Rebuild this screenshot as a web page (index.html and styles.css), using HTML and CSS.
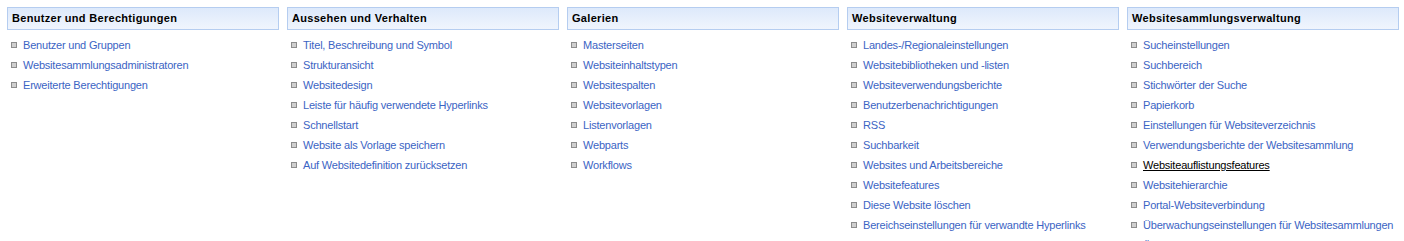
FILE: index.html
```html
<html>

<head>
    <meta charset="UTF-8">
    <title>Websiteeinstellungen</title>
    <link rel="stylesheet" href="styles.css">
</head>

<body>
    <div class="settings">
        <div class="group">
            <h3>Benutzer und Berechtigungen</h3>
            <ul>
                <li><a href="#">Benutzer und Gruppen</a></li>
                <li><a href="#">Websitesammlungsadministratoren</a></li>
                <li><a href="#">Erweiterte Berechtigungen</a></li>
            </ul>
        </div>
        <div class="group">
            <h3>Aussehen und Verhalten</h3>
            <ul>
                <li><a href="#">Titel, Beschreibung und Symbol</a></li>
                <li><a href="#">Strukturansicht</a></li>
                <li><a href="#">Websitedesign</a></li>
                <li><a href="#">Leiste für häufig verwendete Hyperlinks</a></li>
                <li><a href="#">Schnellstart</a></li>
                <li><a href="#">Website als Vorlage speichern</a></li>
                <li><a href="#">Auf Websitedefinition zurücksetzen</a></li>
            </ul>
        </div>
        <div class="group">
            <h3>Galerien</h3>
            <ul>
                <li><a href="#">Masterseiten</a></li>
                <li><a href="#">Websiteinhaltstypen</a></li>
                <li><a href="#">Websitespalten</a></li>
                <li><a href="#">Websitevorlagen</a></li>
                <li><a href="#">Listenvorlagen</a></li>
                <li><a href="#">Webparts</a></li>
                <li><a href="#">Workflows</a></li>
            </ul>
        </div>
        <div class="group">
            <h3>Websiteverwaltung</h3>
            <ul>
                <li><a href="#">Landes-/Regionaleinstellungen</a></li>
                <li><a href="#">Websitebibliotheken und -listen</a></li>
                <li><a href="#">Websiteverwendungsberichte</a></li>
                <li><a href="#">Benutzerbenachrichtigungen</a></li>
                <li><a href="#">RSS</a></li>
                <li><a href="#">Suchbarkeit</a></li>
                <li><a href="#">Websites und Arbeitsbereiche</a></li>
                <li><a href="#">Websitefeatures</a></li>
                <li><a href="#">Diese Website löschen</a></li>
                <li><a href="#">Bereichseinstellungen für verwandte Hyperlinks</a></li>
            </ul>
        </div>
        <div class="group">
            <h3>Websitesammlungsverwaltung</h3>
            <ul>
                <li><a href="#">Sucheinstellungen</a></li>
                <li><a href="#">Suchbereich</a></li>
                <li><a href="#">Stichwörter der Suche</a></li>
                <li><a href="#">Papierkorb</a></li>
                <li><a href="#">Einstellungen für Websiteverzeichnis</a></li>
                <li><a href="#">Verwendungsberichte der Websitesammlung</a></li>
                <li><a href="#" class="hover">Websiteauflistungsfeatures</a></li>
                <li><a href="#">Websitehierarchie</a></li>
                <li><a href="#">Portal-Websiteverbindung</a></li>
                <li><a href="#">Überwachungseinstellungen für Websitesammlungen</a></li>
                <li><a href="#">Überwachungsprotokollberichte</a></li>
            </ul>
        </div>
    </div>
</body>

</html>
```

FILE: styles.css
```css
body {
    margin: 0;
    background-color: white;
    font-family: "Liberation Sans", Arial, sans-serif;
    font-size: 11px;
    overflow: hidden;
}

.settings {
    display: grid;
    grid-template-columns: repeat(5, 272px);
    column-gap: 8px;
    padding: 7px 0 0 7px;
    align-items: start;
}

.group h3 {
    margin: 0;
    height: 21px;
    line-height: 21px;
    padding-left: 4px;
    font-size: 11px;
    font-weight: bold;
    letter-spacing: 0.3px;
    color: black;
    border: 1px solid #b5cdf0;
    background: linear-gradient(to bottom, #dde9fb, #f0f5fd);
}

.group ul {
    list-style: none;
    margin: 0;
    padding: 5px 0 0 0;
}

.group li {
    display: flex;
    align-items: center;
    height: 20px;
    padding-left: 4px;
}

.group li::before {
    content: "";
    flex-shrink: 0;
    width: 4px;
    height: 4px;
    margin-right: 6px;
    border: 1px solid #8c8c8c;
    background-color: #cfcfcf;
}

.group a {
    color: #3b64c4;
    text-decoration: none;
    white-space: nowrap;
    letter-spacing: -0.2px;
}

.group a.hover {
    color: black;
    text-decoration: underline;
}
```
